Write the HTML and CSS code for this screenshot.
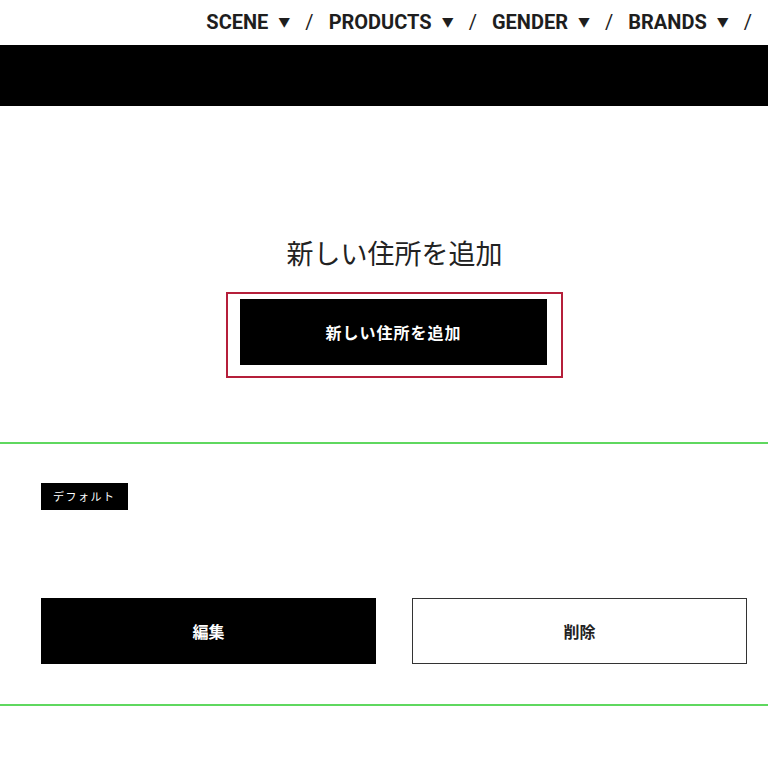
FILE: index.html
```html
<!DOCTYPE html>
<html lang="ja">
<head>
  <meta charset="UTF-8">
  <meta name="viewport" content="width=device-width, initial-scale=1.0">
  <title>住所一覧</title>
  <link rel="stylesheet" href="styles.css">
</head>
<body>
  <header class="site-header">
    <nav class="global-nav">
      <span class="nav-item">SCENE<span class="caret">▼</span></span>
      <span class="sep">/</span>
      <span class="nav-item">PRODUCTS<span class="caret">▼</span></span>
      <span class="sep">/</span>
      <span class="nav-item">GENDER<span class="caret">▼</span></span>
      <span class="sep">/</span>
      <span class="nav-item">BRANDS<span class="caret">▼</span></span>
      <span class="sep">/</span>
    </nav>
  </header>
  <div class="black-bar"></div>

  <section class="add-section">
    <h1 class="add-title">新しい住所を追加</h1>
    <div class="focus-ring">
      <button class="btn btn-black btn-add">新しい住所を追加</button>
    </div>
  </section>

  <section class="address-card">
    <span class="badge">デフォルト</span>
    <div class="card-actions">
      <button class="btn btn-black">編集</button>
      <button class="btn btn-white">削除</button>
    </div>
  </section>
</body>
</html>
```

FILE: styles.css
```css
* {
  box-sizing: border-box;
  margin: 0;
  padding: 0;
}

body {
  font-family: Roboto, "Noto Sans CJK JP", sans-serif;
  background-color: #fff;
  color: #222;
}

.site-header {
  height: 45px;
  display: flex;
  justify-content: flex-end;
  align-items: center;
  padding-right: 1px;
}

.global-nav {
  display: flex;
  align-items: center;
  font-size: 20px;
  font-weight: 700;
  color: #1e1e1e;
  position: relative;
  top: -1px;
}

.caret {
  font-size: 12px;
  margin-left: 10px;
  position: relative;
  top: -2px;
}

.sep {
  font-weight: 400;
  margin: 0 15px 0 15px;
}

.black-bar {
  height: 61px;
  background: #000;
}

.add-section {
  display: flex;
  flex-direction: column;
  align-items: center;
  padding: 128px 0 64px 21px;
  border-bottom: 2px solid #5fd85f;
}

.add-title {
  font-family: "Noto Sans CJK JP", sans-serif;
  font-size: 27px;
  font-weight: 400;
  line-height: 38px;
  color: #222;
  margin-bottom: 20px;
}

.focus-ring {
  border: 2px solid #b51f3a;
  padding: 5px 14px 11px 12px;
}

.btn {
  display: block;
  height: 66px;
  font-family: "Noto Sans CJK JP", sans-serif;
  font-size: 16px;
  font-weight: 700;
  cursor: pointer;
}

.btn-black {
  background: #000;
  color: #fff;
  border: none;
}

.btn-white {
  background: #fff;
  color: #222;
  border: 1px solid #333;
}

.btn-add {
  width: 307px;
  letter-spacing: 1px;
}

.address-card {
  padding: 39px 21px 40px 41px;
  border-bottom: 2px solid #5fd85f;
}

.badge {
  display: inline-block;
  height: 27px;
  line-height: 27px;
  padding: 0 12px;
  background: #000;
  color: #fff;
  font-family: "Noto Sans CJK JP", sans-serif;
  font-size: 11px;
  letter-spacing: 1.5px;
}

.card-actions {
  display: grid;
  grid-template-columns: 1fr 1fr;
  gap: 36px;
  margin-top: 88px;
}

.card-actions .btn {
  width: 100%;
}
```
